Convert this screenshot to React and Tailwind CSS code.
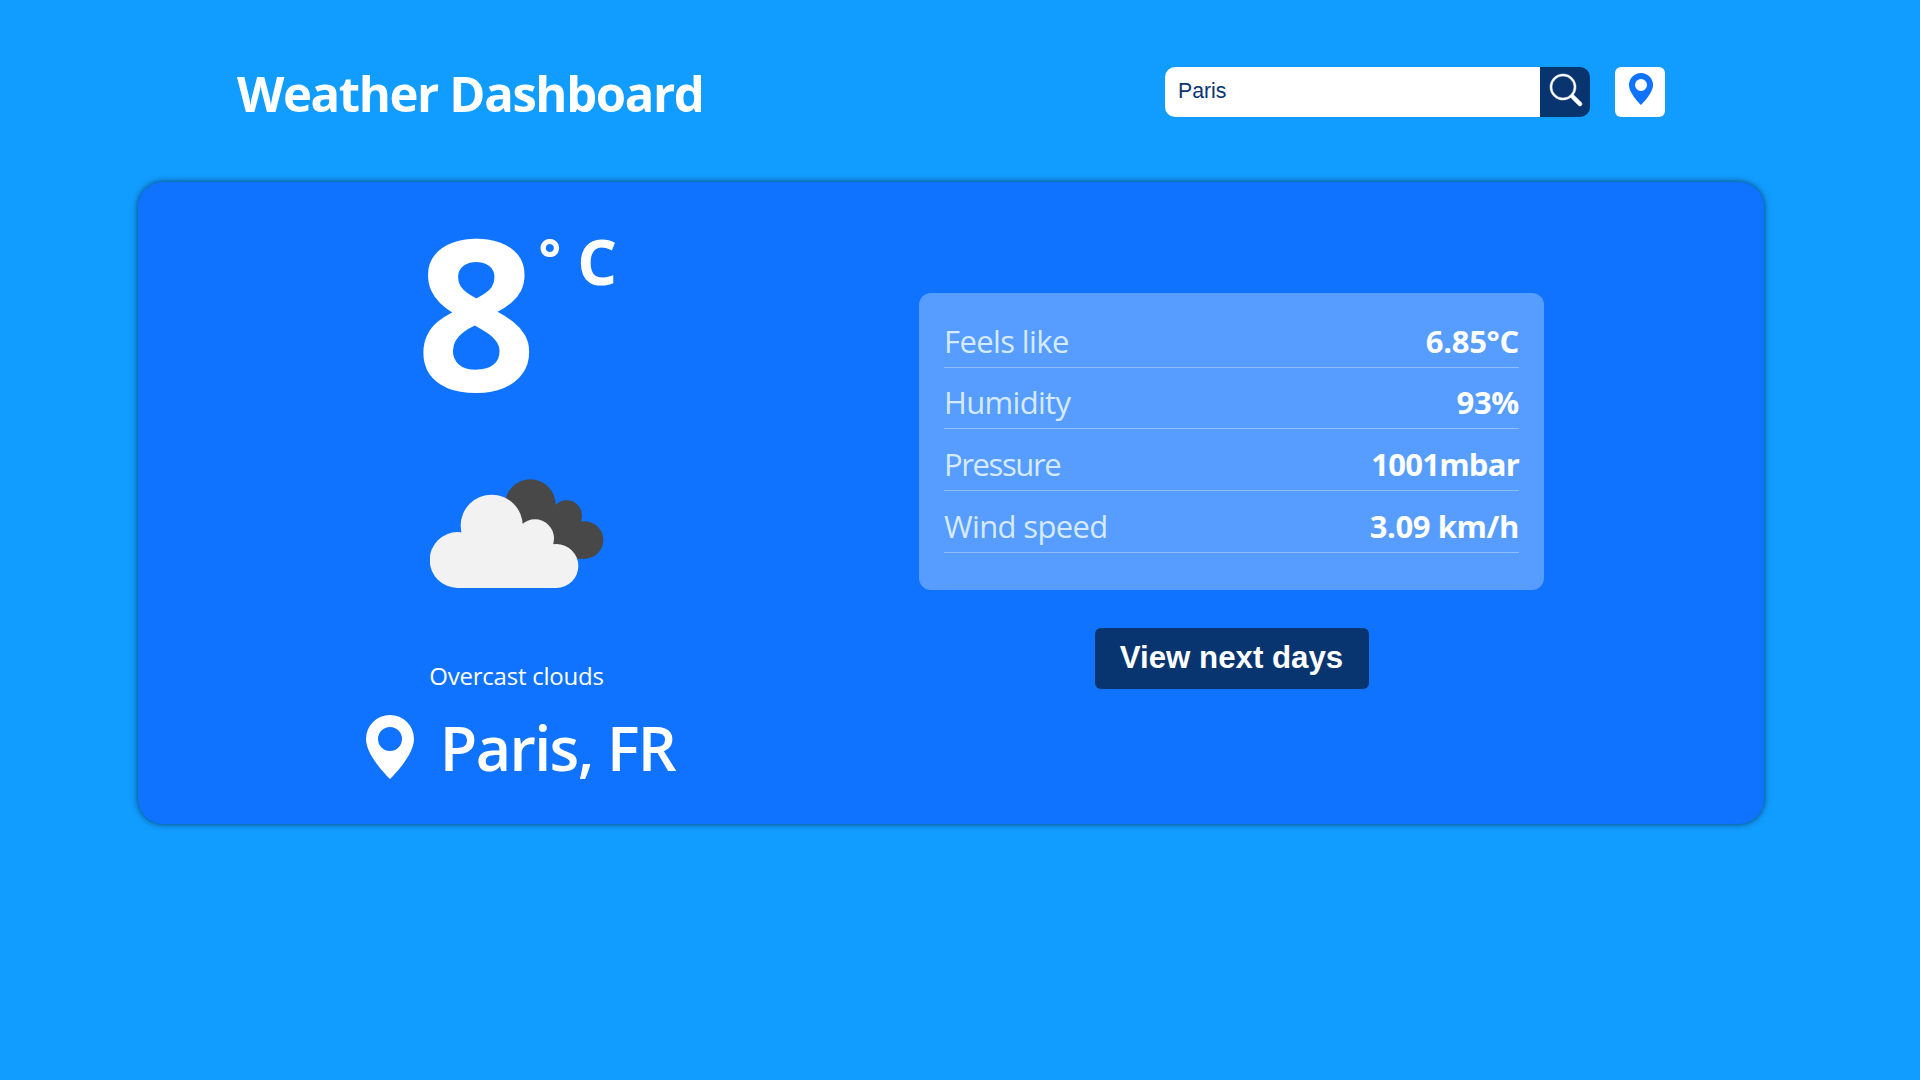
import { BsGeoAltFill, BsSearch } from 'react-icons/bs';

const details = [
  {
    label: 'Feels like',
    value: '6.85°C',
    row: 'h-[62px] pb-2',
    labelTracking: 'tracking-[-0.6px]',
    valueTracking: 'tracking-[-0.3px]',
  },
  {
    label: 'Humidity',
    value: '93%',
    row: 'h-[61px] pb-2',
    labelTracking: 'tracking-[-0.68px]',
    valueTracking: 'tracking-[-0.3px]',
  },
  {
    label: 'Pressure',
    value: '1001mbar',
    row: 'h-[62px] pb-2',
    labelTracking: 'tracking-[-1.4px]',
    valueTracking: 'tracking-[-0.75px]',
  },
  {
    label: 'Wind speed',
    value: '3.09 km/h',
    row: 'h-[62px] pb-2',
    labelTracking: 'tracking-[-0.64px]',
    valueTracking: 'tracking-[-0.4px]',
  },
];

function OvercastIcon() {
  return (
    <svg className="mt-[70px] h-[109px] w-[174px] shrink-0" viewBox="60 57 522 327" aria-hidden="true">
      <g fill="#484849">
        <circle cx="361" cy="134" r="76" />
        <circle cx="470" cy="167" r="46" />
        <circle cx="524" cy="240" r="56" />
        <path d="M340 134H437L512 186L524 240V296H480L340 220Z" />
      </g>
      <g fill="#f2f2f2">
        <circle cx="143" cy="300" r="84" />
        <circle cx="245" cy="197" r="93" />
        <circle cx="375" cy="235" r="57" />
        <circle cx="439" cy="318" r="66" />
        <path d="M143 240H153L245 190H337L431 252L439 260V384H143Z" />
      </g>
    </svg>
  );
}

function Header() {
  return (
    <header className="flex h-[50px] items-center justify-between pr-[255px] pl-[237px]">
      <h1 className="mt-0.5 text-[49px] leading-[60px] font-bold tracking-[-1.38px] whitespace-nowrap">
        Weather Dashboard
      </h1>
      <div className="flex h-[50px]">
        <input
          type="text"
          defaultValue="Paris"
          className="h-[50px] w-[375px] rounded-l-[10px] bg-white px-[13px] pb-px font-['Liberation_Sans',Arial,sans-serif] text-[21.25px] text-[#08356f] outline-none"
        />
        <button
          aria-label="Search"
          className="flex h-[50px] w-[50px] justify-center rounded-r-[10px] bg-[#08356f] pt-[6.5px] pl-px"
        >
          <BsSearch className="size-8 overflow-visible stroke-current [stroke-width:0.25]" />
        </button>
        <button
          aria-label="Use my location"
          className="ml-[25px] flex h-[50px] w-[50px] justify-center rounded-[6px] bg-white pt-[6px] pl-px text-[#0f73ff]"
        >
          <BsGeoAltFill className="size-8" />
        </button>
      </div>
    </header>
  );
}

function CurrentWeather() {
  return (
    <section className="flex w-[758px] flex-col items-center pt-7">
      <div className="flex h-[199px] items-start font-bold">
        <span className="text-[211px] leading-[199px]">8</span>
        <span className="mt-[28px] ml-[2px] text-[53px] leading-[40px]">°</span>
        <span className="mt-[26px] ml-4 text-[62.5px] leading-[50px]">C</span>
      </div>
      <OvercastIcon />
      <p className="mt-[72px] text-2xl leading-8 tracking-[-0.22px]">Overcast clouds</p>
      <div className="mt-[23px] flex h-16 items-center gap-[18px]">
        <BsGeoAltFill className="size-16" />
        <span className="mt-0.5 text-[61px] leading-[64px] font-semibold tracking-[-1.6px] whitespace-nowrap">Paris, FR</span>
      </div>
    </section>
  );
}

function WeatherDetails() {
  return (
    <section className="flex w-[672px] flex-col items-center pt-[111px]">
      <div className="h-[297px] w-[625px] rounded-xl bg-white/30 px-[25px] pt-[13px]">
        {details.map((item) => (
          <div
            key={item.label}
            className={`flex items-end justify-between border-b border-[#8fbdf8] text-[31px] leading-9 ${item.row}`}
          >
            <span className={`text-[#d6eaff] ${item.labelTracking}`}>{item.label}</span>
            <span className={`font-bold ${item.valueTracking}`}>{item.value}</span>
          </div>
        ))}
      </div>
      <button className="mt-[38px] h-[61px] w-[274px] rounded-[6px] bg-[#08356f] pb-px font-['Liberation_Sans',Arial,sans-serif] text-[31.25px] leading-9 font-bold whitespace-nowrap">
        View next days
      </button>
    </section>
  );
}

export default function App() {
  return (
    <div className="min-h-screen bg-[#119cff] pt-[67px] font-['Open_Sans','Noto_Sans',sans-serif] text-white">
      <Header />
      <main className="mt-[65px] ml-[137.5px] flex h-[642px] w-[1626.5px] rounded-[25px] bg-[#0f73ff] shadow-[0_0_6px_rgba(0,0,0,0.6)]">
        <CurrentWeather />
        <WeatherDetails />
      </main>
    </div>
  );
}
